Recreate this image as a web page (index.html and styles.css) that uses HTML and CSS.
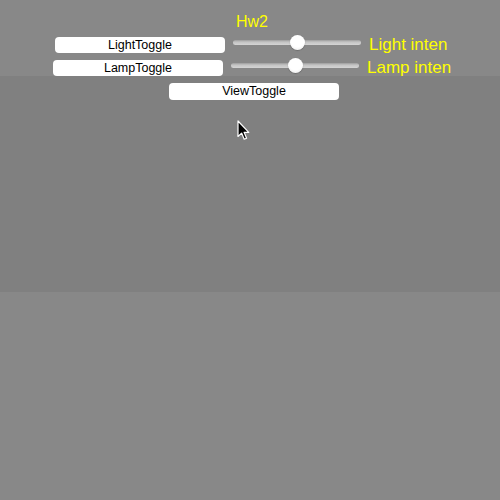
FILE: index.html
```html
<!DOCTYPE html>
<html>
<head>
<meta charset="utf-8">
<link rel="stylesheet" href="styles.css">
</head>
<body>
<div class="header">
  <div class="title">Hw2</div>
  <div class="row row-light">
    <button class="btn">LightToggle</button>
    <div class="slider"><div class="track"></div><div class="thumb"></div></div>
    <span class="label">Light inten</span>
  </div>
  <div class="row row-lamp">
    <button class="btn">LampToggle</button>
    <div class="slider"><div class="track"></div><div class="thumb"></div></div>
    <span class="label">Lamp inten</span>
  </div>
</div>
<div class="canvas">
  <button class="btn btn-view">ViewToggle</button>
  <svg class="cursor" width="14" height="21" viewBox="0 0 14 21">
    <path d="M1 1 L1 16.5 L4.6 13.1 L7.2 19.2 L9.6 18.2 L7.1 12.3 L11.8 12.3 Z" fill="#000" stroke="#fff" stroke-width="1.2" stroke-linejoin="round"/>
  </svg>
</div>
</body>
</html>
```
FILE: styles.css
```css
html, body {
  margin: 0;
  padding: 0;
  background: #888888;
  width: 500px;
  height: 500px;
  overflow: hidden;
  font-family: "Liberation Sans", Arial, sans-serif;
}
.header {
  height: 76px;
  display: flex;
  flex-direction: column;
}
.title {
  color: #ffff00;
  font-size: 16px;
  line-height: 18px;
  padding-top: 13px;
  padding-left: 236px;
}
.row {
  display: flex;
  align-items: center;
  height: 16px;
}
.row-light {
  margin-top: 6px;
  padding-left: 55px;
}
.row-lamp {
  margin-top: 7px;
  padding-left: 53px;
}
.btn {
  box-sizing: border-box;
  width: 170px;
  height: 16px;
  margin: 0;
  padding: 0;
  border: none;
  border-radius: 4px;
  background: #ffffff;
  color: #000000;
  font-family: "Liberation Sans", Arial, sans-serif;
  font-size: 12.5px;
  line-height: 16px;
  text-align: center;
}
.slider {
  position: relative;
  width: 128px;
  height: 15px;
  margin-left: 8px;
  margin-bottom: 5px;
  display: flex;
  align-items: center;
}
.track {
  width: 100%;
  height: 5px;
  border-radius: 2.5px;
  background: linear-gradient(#9c9c9c, #c4c4c4 40%, #d4d4d4);
}
.thumb {
  position: absolute;
  left: 57px;
  top: 0;
  width: 15px;
  height: 15px;
  border-radius: 50%;
  background: radial-gradient(circle at 50% 35%, #ffffff 55%, #e4e4e4 100%);
  box-shadow: 0 0.5px 1px rgba(0,0,0,0.35);
}
.label {
  color: #ffff00;
  font-size: 17px;
  line-height: 18px;
  margin-left: 8px;
  white-space: nowrap;
}
.canvas {
  position: relative;
  width: 500px;
  height: 216px;
  background: #808080;
  padding-top: 7px;
  box-sizing: border-box;
}
.btn-view {
  display: block;
  height: 17px;
  line-height: 17px;
  margin-left: 169px;
}
.cursor {
  position: absolute;
  left: 237px;
  top: 44px;
}
```
